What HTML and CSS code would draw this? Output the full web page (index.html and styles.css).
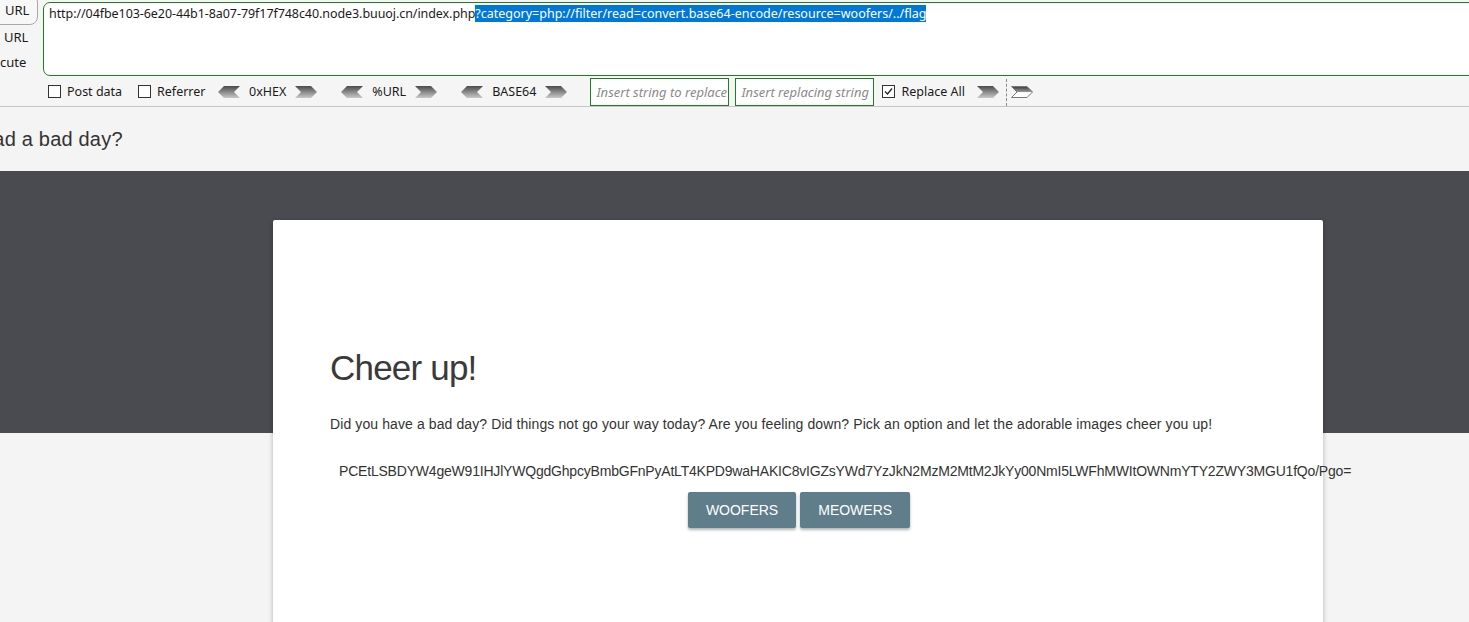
FILE: index.html
```html
<!DOCTYPE html>
<html>
<head>
<meta charset="utf-8">
<link rel="stylesheet" href="styles.css">
</head>
<body>
<div class="hackbar">
  <div class="hb-top">
    <div class="hb-side">
      <div class="hb-btn">URL</div>
      <div class="hb-lbl">URL</div>
      <div class="hb-lbl cut">cute</div>
    </div>
    <div class="hb-url"><span class="plain">http://04fbe103-6e20-44b1-8a07-79f17f748c40.node3.buuoj.cn/index.php</span><span class="sel">?category=php://filter/read=convert.base64-encode/resource=woofers/../flag</span></div>
  </div>
  <div class="hb-tools">
    <label class="chk c1"><span class="box"></span>Post data</label>
    <label class="chk c2"><span class="box"></span>Referrer</label>
    <div class="enc">
      <svg class="arr" width="22" height="12" viewBox="0 0 22 12"><defs><linearGradient id="g1" x1="0" y1="0" x2="0" y2="1"><stop offset="0" stop-color="#4a4a4a"/><stop offset="0.5" stop-color="#8a8a8a"/><stop offset="1" stop-color="#c8c8c8"/></linearGradient></defs><polygon points="6,0 22,0 16,6 22,12 6,12 0,6" fill="url(#g1)"/></svg>
      <span>0xHEX</span>
      <svg class="arr" width="22" height="12" viewBox="0 0 22 12"><polygon points="0,0 16,0 22,6 16,12 0,12 6,6" fill="url(#g1)"/></svg>
    </div>
    <div class="enc">
      <svg class="arr" width="22" height="12" viewBox="0 0 22 12"><polygon points="6,0 22,0 16,6 22,12 6,12 0,6" fill="url(#g1)"/></svg>
      <span>%URL</span>
      <svg class="arr" width="22" height="12" viewBox="0 0 22 12"><polygon points="0,0 16,0 22,6 16,12 0,12 6,6" fill="url(#g1)"/></svg>
    </div>
    <div class="enc">
      <svg class="arr" width="22" height="12" viewBox="0 0 22 12"><polygon points="6,0 22,0 16,6 22,12 6,12 0,6" fill="url(#g1)"/></svg>
      <span>BASE64</span>
      <svg class="arr" width="22" height="12" viewBox="0 0 22 12"><polygon points="0,0 16,0 22,6 16,12 0,12 6,6" fill="url(#g1)"/></svg>
    </div>
    <div class="inp first">Insert string to replace</div>
    <div class="inp">Insert replacing string</div>
    <label class="chk on"><span class="box"><svg width="11" height="11" viewBox="0 0 11 11"><polyline points="2,5.5 4.5,8 9,2.5" fill="none" stroke="#222" stroke-width="1.3"/></svg></span>Replace All</label>
    <svg class="arr go" width="22" height="12" viewBox="0 0 22 12"><polygon points="0,0 16,0 22,6 16,12 0,12 6,6" fill="url(#g1)"/></svg>
    <div class="sep"></div>
    <svg class="arr" width="22" height="12" viewBox="0 0 22 12"><defs><linearGradient id="g2" x1="0" y1="0" x2="0" y2="1"><stop offset="0" stop-color="#3c3c3c"/><stop offset="0.5" stop-color="#9a9a9a"/><stop offset="0.55" stop-color="#ffffff"/><stop offset="1" stop-color="#ffffff"/></linearGradient></defs><polygon points="0.5,0.5 16,0.5 21.5,6 16,11.5 0.5,11.5 6,6" fill="url(#g2)" stroke="#777" stroke-width="1"/></svg>
  </div>
</div>

<div class="nav"><span class="brand">had a bad day?</span></div>

<div class="main">
  <div class="card">
    <h1 class="title">Cheer up!</h1>
    <p class="lead">Did you have a bad day? Did things not go your way today? Are you feeling down? Pick an option and let the adorable images cheer you up!</p>
    <div class="b64">PCEtLSBDYW4geW91IHJlYWQgdGhpcyBmbGFnPyAtLT4KPD9waHAKIC8vIGZsYWd7YzJkN2MzM2MtM2JkYy00NmI5LWFhMWItOWNmYTY2ZWY3MGU1fQo/Pgo=</div>
    <div class="btns">
      <button class="btn">Woofers</button>
      <button class="btn">Meowers</button>
    </div>
  </div>
</div>
</body>
</html>
```

FILE: styles.css
```css
html, body {
  margin: 0;
  padding: 0;
  overflow: hidden;
  background: #f4f4f4;
}
body {
  width: 1469px;
  height: 622px;
}
.hackbar {
  background: #f5f5f5;
  border-bottom: 1px solid #c6c6c6;
  font-family: "Noto Sans", "Liberation Sans", sans-serif;
  font-size: 12.5px;
  color: #1a1a1a;
  overflow: hidden;
}
.hb-top {
  display: flex;
  height: 77px;
}
.hb-side {
  width: 43px;
  flex: none;
  display: flex;
  flex-direction: column;
  overflow: hidden;
  font-size: 13px;
}
.hb-btn {
  box-sizing: border-box;
  margin: -6px 0 0 -12px;
  width: 50px;
  height: 31px;
  border: 1px solid #a8a8a8;
  border-radius: 8px;
  background: #f7f7f7;
  padding: 6px 0 0 16px;
  line-height: 18px;
}
.hb-lbl {
  margin-top: 3px;
  padding-left: 4px;
  line-height: 18px;
}
.hb-lbl.cut {
  margin-top: 7px;
  padding-left: 0;
}
.hb-url {
  flex: 1;
  margin: 2px -20px 0 0;
  height: 74px;
  box-sizing: border-box;
  border: 1px solid #1f7f1f;
  border-radius: 7px 0 0 7px;
  background: #fff;
  padding: 2px 0 0 5px;
  line-height: 17px;
  white-space: nowrap;
}
.plain {
  letter-spacing: -0.07px;
}
.sel {
  background: #0078d7;
  color: #fff;
}
.hb-tools {
  height: 29px;
  display: flex;
  align-items: center;
  padding-left: 48px;
}
.chk {
  display: flex;
  align-items: center;
  white-space: nowrap;
}
.c1 {
  width: 90px;
}
.c2 {
  width: 80px;
}
.box {
  box-sizing: border-box;
  width: 13px;
  height: 13px;
  border: 1px solid #333;
  background: #fff;
  margin-right: 6px;
  display: flex;
  align-items: center;
  justify-content: center;
  flex: none;
}
.enc {
  display: flex;
  align-items: center;
  margin-right: 24px;
}
.enc span {
  padding: 0 9px 0 9px;
}
.arr {
  display: block;
  flex: none;
}
.inp {
  box-sizing: border-box;
  width: 139px;
  height: 28px;
  margin-top: 1px;
  border: 1px solid #1f7f1f;
  background: #fff;
  color: #8a8a8a;
  font-style: italic;
  font-size: 13px;
  padding: 0 0 0 5px;
  line-height: 26px;
  white-space: nowrap;
  overflow: hidden;
  margin-right: 6px;
}
.inp.first {
  margin-left: -1px;
}
.chk.on {
  margin-left: 2px;
  width: 95px;
}
.go {
  margin-right: 7px;
}
.sep {
  align-self: stretch;
  width: 0;
  margin: 2px 4px 0 0;
  border-left: 1px dashed #8a8a8a;
}

.nav {
  height: 64px;
  line-height: 64px;
  font-family: "Liberation Sans", Arial, sans-serif;
  font-size: 20px;
  letter-spacing: 0.2px;
  color: #333;
  overflow: hidden;
  white-space: nowrap;
}
.brand {
  display: inline-block;
  margin-left: -18px;
}
.main {
  background: linear-gradient(#4a4b50 0, #4a4b50 262px, #f4f4f4 262px);
  padding: 49px 0 0 273px;
  height: 500px;
}
.card {
  box-sizing: border-box;
  width: 1050px;
  height: 460px;
  background: #fff;
  border-radius: 2px;
  box-shadow: 0 2px 5px rgba(0,0,0,0.28);
  padding: 128px 57px 0 57px;
  font-family: "Liberation Sans", Arial, sans-serif;
  color: #333;
}
.title {
  margin: 0;
  font-size: 35px;
  letter-spacing: -0.8px;
  font-weight: normal;
  line-height: 40px;
  color: #3a3a3a;
}
.lead {
  margin: 26px 0 0 0;
  font-size: 14px;
  line-height: 20px;
  letter-spacing: 0.1px;
}
.b64 {
  margin: 27px 0 0 9px;
  font-size: 14px;
  line-height: 20px;
  letter-spacing: -0.2px;
  white-space: nowrap;
}
.btns {
  display: flex;
  justify-content: center;
  gap: 4px;
  margin: 11px 0 0 2px;
}
.btn {
  height: 36px;
  padding: 0 18px;
  border: none;
  border-radius: 2px;
  background: #607d8b;
  color: #fff;
  font-family: "Liberation Sans", Arial, sans-serif;
  font-size: 14px;
  text-transform: uppercase;
  box-shadow: 0 2px 3px rgba(0,0,0,0.3);
}
```
